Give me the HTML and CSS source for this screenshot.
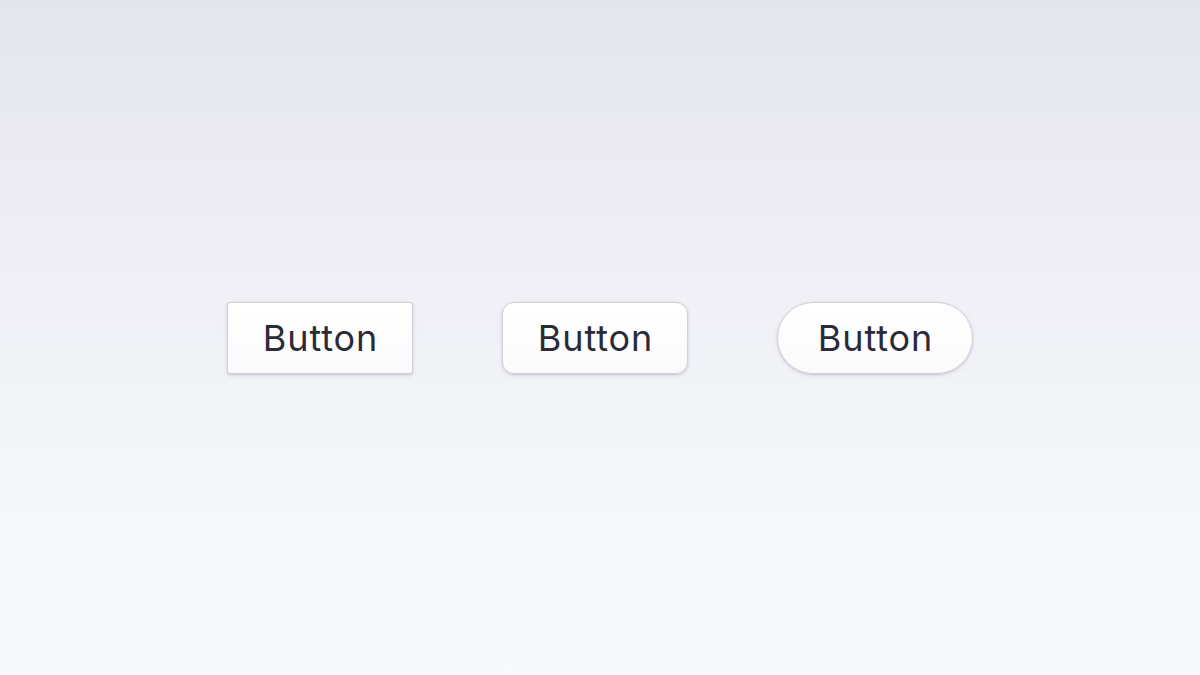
FILE: index.html
```html
<!DOCTYPE html>
<html>
<head>
<meta charset="utf-8">
<link rel="stylesheet" href="styles.css">
</head>
<body>
<main class="stage">
  <button class="btn btn-square">Button</button>
  <button class="btn btn-rounded">Button</button>
  <button class="btn btn-pill">Button</button>
</main>
</body>
</html>
```
FILE: styles.css
```css
html, body {
  margin: 0;
  padding: 0;
  height: 100%;
}
body {
  background: linear-gradient(180deg, #e5e5ee 0%, #ebebf1 25%, #f1f2f7 50%, #f6f7fb 75%, #f8f9fd 100%);
  font-family: Inter, "Noto Sans", sans-serif;
}
.stage {
  height: 675px;
  display: flex;
  align-items: center;
  justify-content: center;
  gap: 89px;
}
.btn {
  box-sizing: border-box;
  height: 72px;
  width: 186px;
  font-family: Inter, "Noto Sans", sans-serif;
  font-size: 36px;
  font-weight: 400;
  letter-spacing: 0.9px;
  color: #2a2b36;
  background: linear-gradient(180deg, #ffffff 0%, #fbfbfd 100%);
  border: 1px solid #cfd0d8;
  box-shadow: 0 1px 2px rgba(40, 40, 70, 0.18), 0 2px 6px rgba(40, 40, 70, 0.06);
  padding: 1px 0 0 1px;
  display: flex;
  align-items: center;
  justify-content: center;
}
.btn-square {
  border-radius: 3px;
}
.btn-rounded {
  border-radius: 12px;
}
.btn-pill {
  width: 196px;
  border-radius: 36px;
}
```
